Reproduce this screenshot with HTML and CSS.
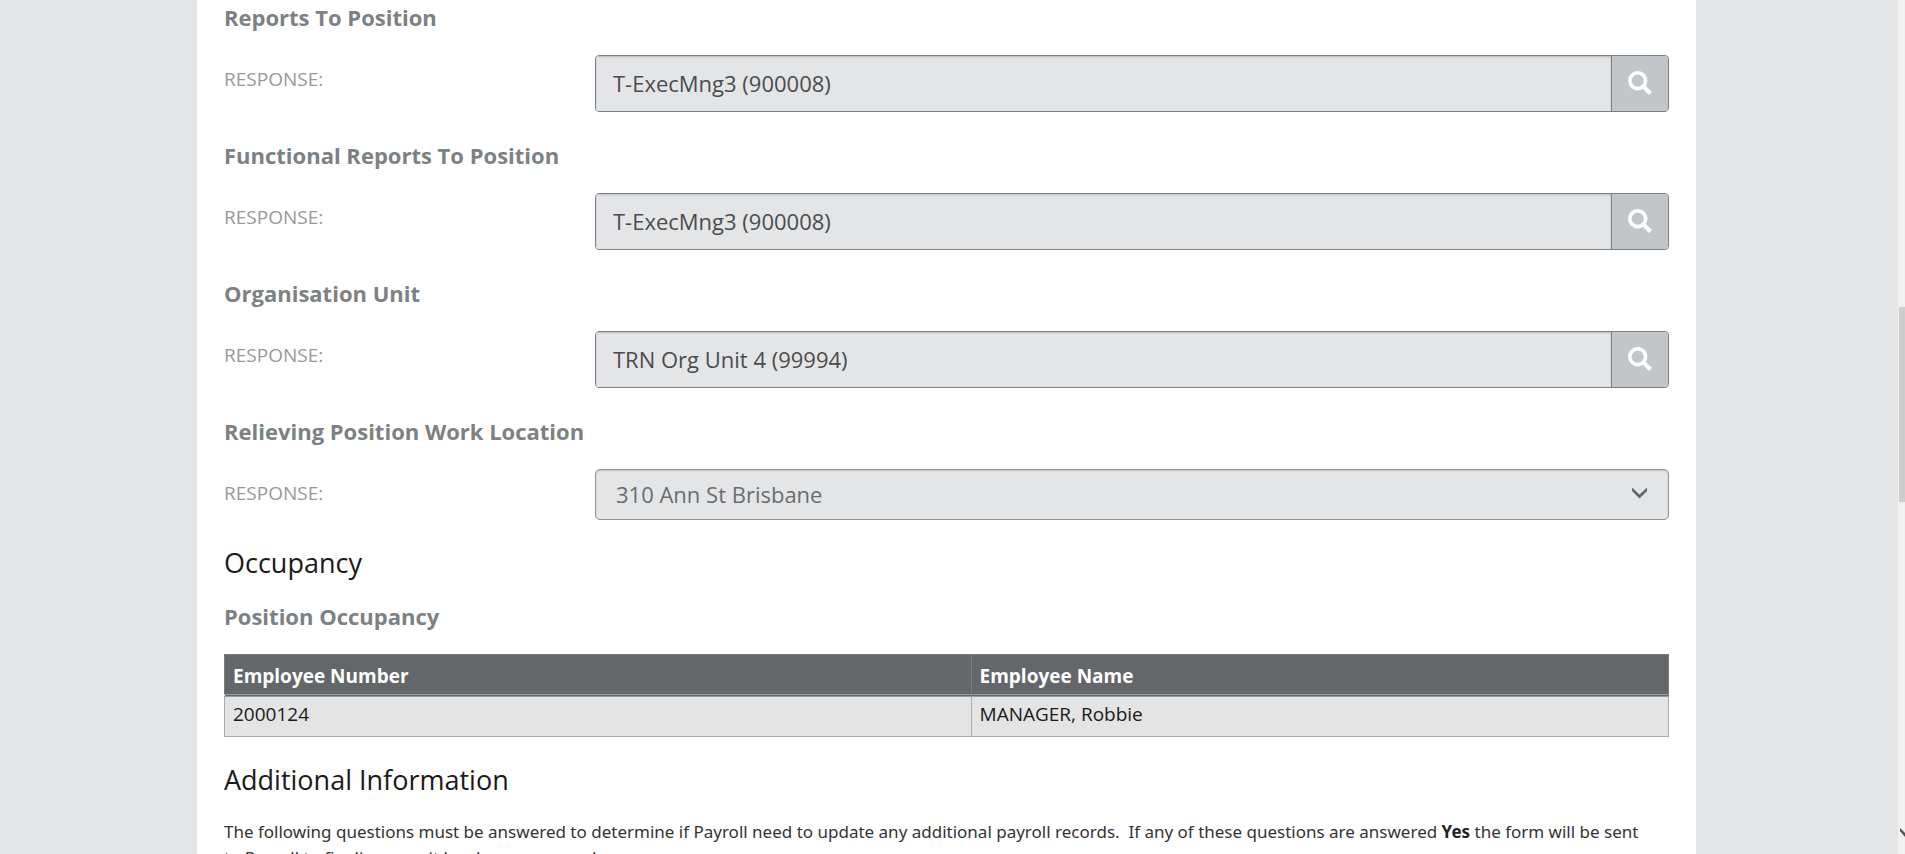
FILE: index.html
```html
<!DOCTYPE html>
<html lang="en">
<head>
<meta charset="utf-8">
<title>Relieving Position Form</title>
<link rel="stylesheet" href="styles.css">
</head>
<body>
<svg class="sprite" aria-hidden="true">
  <symbol id="search" viewBox="0 0 24 24">
    <circle cx="9.7" cy="9.7" r="7.9" fill="none" stroke="currentColor" stroke-width="3.6"/>
    <path d="M15.2 15.2 22.5 22.5" fill="none" stroke="currentColor" stroke-width="4.2"/>
  </symbol>
</svg>
<div class="viewport">
  <div class="backdrop">
    <main class="page">
      <form>
        <section class="question">
          <h3 class="title">Reports To Position</h3>
          <div class="row">
            <label class="label" for="reports">RESPONSE:</label>
            <div class="lookup">
              <input class="lookup-input" id="reports" type="text" value="T-ExecMng3 (900008)" readonly>
              <button class="lookup-button" type="button" aria-label="Search"><svg class="icon"><use href="#search"/></svg></button>
            </div>
          </div>
        </section>
        <section class="question">
          <h3 class="title">Functional Reports To Position</h3>
          <div class="row">
            <label class="label" for="functional">RESPONSE:</label>
            <div class="lookup">
              <input class="lookup-input" id="functional" type="text" value="T-ExecMng3 (900008)" readonly>
              <button class="lookup-button" type="button" aria-label="Search"><svg class="icon"><use href="#search"/></svg></button>
            </div>
          </div>
        </section>
        <section class="question">
          <h3 class="title">Organisation Unit</h3>
          <div class="row">
            <label class="label" for="unit">RESPONSE:</label>
            <div class="lookup">
              <input class="lookup-input" id="unit" type="text" value="TRN Org Unit 4 (99994)" readonly>
              <button class="lookup-button" type="button" aria-label="Search"><svg class="icon"><use href="#search"/></svg></button>
            </div>
          </div>
        </section>
        <section class="question">
          <h3 class="title">Relieving Position Work Location</h3>
          <div class="row">
            <label class="label" for="location">RESPONSE:</label>
            <div class="choice">
              <select class="select" id="location"><option>310 Ann St Brisbane</option></select>
              <svg class="chevron" viewBox="0 0 16 12" aria-hidden="true"><path d="M0 0.5 7.5 7.5 15 0.5V4L7.5 11.5 0 4Z" fill="currentColor"/></svg>
            </div>
          </div>
        </section>
        <section>
          <h2 class="section-title">Occupancy</h2>
          <h3 class="title table-title">Position Occupancy</h3>
          <table class="table">
            <thead><tr><th class="wide" scope="col">Employee Number</th><th scope="col">Employee Name</th></tr></thead>
            <tbody><tr><td>2000124</td><td>MANAGER, Robbie</td></tr></tbody>
          </table>
        </section>
        <section>
          <h2 class="section-title">Additional Information</h2>
          <p class="note">The following questions must be answered to determine if Payroll need to update any additional payroll records.&nbsp; If any of these questions are answered <strong>Yes</strong> the form will be sent to Payroll to finalise once it has been approved.</p>
        </section>
      </form>
    </main>
  </div>
  <div class="scrollbar" aria-hidden="true">
    <div class="thumb"></div>
    <svg class="scroll-arrow" viewBox="0 0 7 12"><path d="M2 2 7 7V11L2 5Z" fill="#505050"/></svg>
  </div>
</div>
</body>
</html>
```
FILE: styles.css
```css
* { box-sizing: border-box; }
body {
  margin: 0;
  font-family: "Open Sans", "Noto Sans", sans-serif;
  color: #1a1a1a;
}
.sprite { position: absolute; width: 0; height: 0; }
.viewport {
  display: flex;
  height: 100vh;
  overflow: hidden;
  background: #e4e5e7;
}
.backdrop {
  flex: 1;
  display: grid;
  grid-template-columns: 197fr 1499fr 202fr;
}
.page {
  grid-column: 2;
  min-width: 0;
  padding: 0 27px;
  background: #fff;
}
.question + .question { margin-top: 26px; }
.title {
  margin: 0;
  font-size: 22px;
  line-height: 34px;
  font-weight: 700;
  color: #7c8184;
}
.row {
  display: grid;
  grid-template-columns: 371fr 1074fr;
  align-items: start;
  padding-top: 21px;
}
.label {
  padding-top: 8px;
  font-size: 19px;
  line-height: 32px;
  color: #97999b;
}
.lookup {
  display: flex;
  height: 57px;
  border: 1px solid #7b8185;
  border-radius: 4px;
  overflow: hidden;
}
.lookup-input {
  flex: 1;
  min-width: 0;
  padding: 0 17px 2px;
  border: 0;
  border-radius: 0;
  background: #e4e5e7;
  box-shadow: inset 0 1px 2px rgba(0, 0, 0, 0.2);
  font: 22px "Open Sans", "Noto Sans", sans-serif;
  color: #4a4c4f;
}
.lookup-button {
  display: grid;
  place-items: center;
  width: 57px;
  padding: 0 0 2px;
  border: 0;
  border-left: 1px solid #7b8185;
  background: #c3c6c9;
  color: #fff;
}
.icon { width: 24px; height: 24px; }
.choice { display: grid; align-items: center; }
.select {
  grid-area: 1 / 1;
  width: 100%;
  height: 51px;
  padding: 0 20px 2px;
  appearance: none;
  border: 1px solid #919496;
  border-radius: 5px;
  background: #e4e5e7;
  box-shadow: inset 0 1px 2px rgba(0, 0, 0, 0.15);
  font: 22px "Open Sans", "Noto Sans", sans-serif;
  color: #6b6d70;
}
.chevron {
  grid-area: 1 / 1;
  justify-self: end;
  width: 16px;
  height: 12px;
  margin: 0 21px 3px 0;
  color: #646669;
  pointer-events: none;
}
.section-title {
  margin: 23px 0 0;
  font-size: 27px;
  line-height: 40px;
  font-weight: 400;
}
.table-title { padding: 16px 0 21px; }
.table {
  width: 100%;
  border-collapse: collapse;
  font-size: 19px;
  line-height: 32px;
}
.table th {
  padding: 5px 8px 2px;
  border: 1px solid #767b7f;
  border-bottom: 3px double #9a9ca3;
  background: #63676a;
  color: #fff;
  text-align: left;
}
.table td {
  padding: 1px 8px 6px;
  border: 1px solid #a8abae;
  background: #e4e4e4;
}
.table .wide { width: 51.7%; }
.note {
  margin: 19px 0 0;
  padding-right: 16px;
  font-family: "Noto Sans", "Open Sans", sans-serif;
  font-size: 17px;
  line-height: 26px;
  color: #333;
}
.note strong { color: #222; }
.scrollbar {
  position: relative;
  width: 7px;
  background: #f0f0f0;
}
.thumb {
  height: 195px;
  margin: 307px 0 0 1px;
  background: #cdcdcd;
}
.scroll-arrow {
  position: absolute;
  right: 0;
  bottom: 16px;
  width: 7px;
  height: 12px;
}
```
